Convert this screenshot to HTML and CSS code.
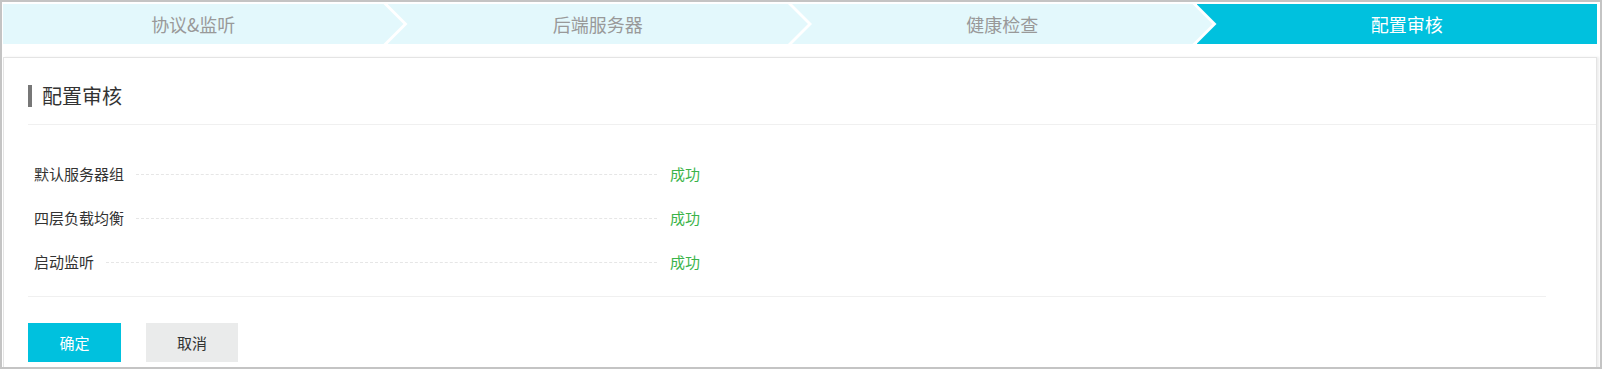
FILE: index.html
```html
<!DOCTYPE html>
<html>
    <head>
        <meta charset="utf-8">
        <title>配置审核</title>
        <link rel="stylesheet" href="styles.css">
    </head>
    <body>
        <div class="frame">
            <ul class="steps">
                <li class="step first">协议&amp;监听</li>
                <li class="step">后端服务器</li>
                <li class="step">健康检查</li>
                <li class="step last active">配置审核</li>
            </ul>
            <div class="card">
                <h2 class="card-title"><span>配置审核</span></h2>
                <ul class="checks">
                    <li class="check">
                        <span class="check-name">默认服务器组</span>
                        <span class="check-dots"></span>
                        <span class="check-status">成功</span>
                    </li>
                    <li class="check">
                        <span class="check-name">四层负载均衡</span>
                        <span class="check-dots"></span>
                        <span class="check-status">成功</span>
                    </li>
                    <li class="check">
                        <span class="check-name">启动监听</span>
                        <span class="check-dots"></span>
                        <span class="check-status">成功</span>
                    </li>
                </ul>
                <div class="actions">
                    <a href="#" class="btn btn-primary">确定</a>
                    <a href="#" class="btn">取消</a>
                </div>
            </div>
        </div>
    </body>
</html>
```

FILE: styles.css
```css
body {
    margin: 0;
    padding: 0;
    background: #fff;
    font-family: "Microsoft YaHei", "Noto Sans CJK SC", sans-serif;
    color: #333;
}

.frame {
    box-sizing: border-box;
    width: 1602px;
    height: 369px;
    border: 2px solid #c4c4c4;
    padding: 2px 3px 0 1px;
    overflow: hidden;
}

/* wizard steps */
.steps {
    display: flex;
    margin: 0;
    padding: 0;
    list-style: none;
}
.step {
    flex: 1 1 0;
    height: 40px;
    line-height: 40px;
    padding: 0 20px;
    margin-left: -16px;
    text-align: center;
    font-size: 18px;
    color: #999;
    background: #e3f8fc;
    clip-path: polygon(0 0, calc(100% - 20px) 0, 100% 50%, calc(100% - 20px) 100%, 0 100%, 20px 50%);
}
.step.first {
    margin-left: 0;
    padding-left: 0;
    clip-path: polygon(0 0, calc(100% - 20px) 0, 100% 50%, calc(100% - 20px) 100%, 0 100%);
}
.step.last {
    padding-right: 0;
    clip-path: polygon(0 0, 100% 0, 100% 100%, 0 100%, 20px 50%);
}
.step.active {
    background: #00c1de;
    color: #fff;
}

/* card */
.card {
    margin-top: 13px;
    height: 400px;
    padding: 0 0 0 24px;
    border: 1px solid #e4e4e4;
    box-shadow: 2px 0 2px rgba(0, 0, 0, 0.07);
}
.card-title {
    margin: 0;
    padding: 27px 0 17px 0;
    border-bottom: 1px solid #f0f0f0;
    font-size: 20px;
    font-weight: normal;
    line-height: 22px;
}
.card-title span {
    display: block;
    border-left: 4px solid #777;
    padding-left: 10px;
    color: #333;
}

.checks {
    margin: 26px 0 0 0;
    padding: 0 0 0 6px;
    list-style: none;
}
.check {
    display: flex;
    align-items: center;
    width: 666px;
    height: 44px;
    font-size: 15px;
}
.check-name {
    color: #333;
}
.check-dots {
    flex: 1;
    margin: 2px 13px 0 12px;
    border-top: 1px dashed #e6e6e6;
}
.check-status {
    color: #3bb44a;
}

.actions {
    margin: 13px 50px 0 0;
    padding-top: 26px;
    border-top: 1px solid #f0f0f0;
    display: flex;
    gap: 25px;
}
.btn {
    display: block;
    width: 92px;
    height: 39px;
    line-height: 39px;
    text-align: center;
    font-size: 15px;
    color: #333;
    background: #eaebeb;
    text-decoration: none;
}
.btn-primary {
    width: 93px;
    background: #00c1de;
    color: #fff;
}
```
